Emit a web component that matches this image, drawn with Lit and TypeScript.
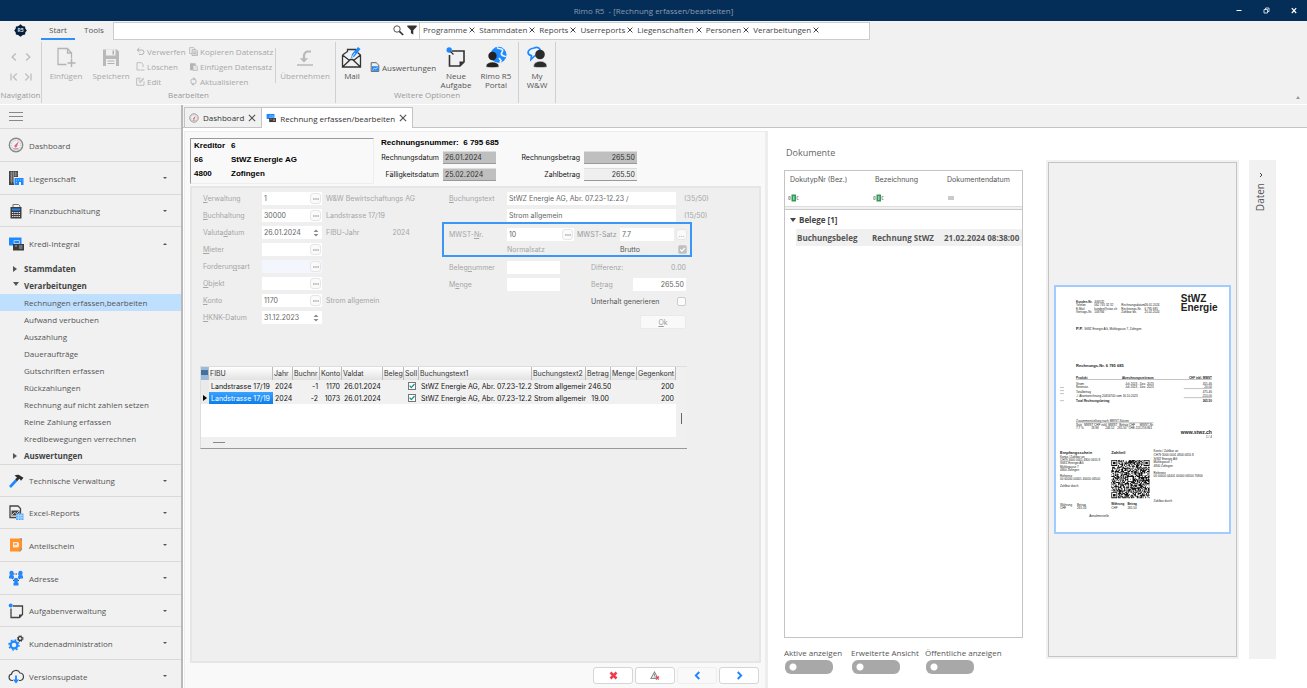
import { LitElement, html, svg, css, nothing, TemplateResult } from 'lit';
import { customElement, property, state } from 'lit/decorators.js';
import { classMap } from 'lit/directives/class-map.js';

const BLUE = '#1e88ff';
const GREY = '#b4b4b4';

const glyph = (w: number, h: number, box: string, body: TemplateResult<2>) =>
  html`<svg class="glyph" width=${w} height=${h} viewBox=${box} fill="none" aria-hidden="true">${body}</svg>`;

const icons: Record<string, () => TemplateResult> = {
  logo: () => glyph(13, 13, '0 0 13 13', svg`<path d="M6.500 0.300l2.400 1.900 2.200.3.200 2 1.500 2-1.500 2-.2 2.100-2.200.3-2.400 1.900-2.400-1.900-2.200-.3-.2-2.100-1.500-2 1.500-2 .2-2 2.200-.3z" fill="#06203c"/><text x="6.500" y="8.400" font-size="5" font-weight="700" fill="#d8e2ee" text-anchor="middle">R5</text>`),
  close: () => glyph(6, 6, '0 0 6 6', svg`<path d="M.6.6l4.800 4.800M5.400.6L.6 5.400" stroke="#444" stroke-width="1"/>`),
  tabClose: () => glyph(8, 8, '0 0 9 9', svg`<path d="M1 1l7 7M8 1L1 8" stroke="#555" stroke-width="1.300"/>`),
  min: () => glyph(6, 7, '0 0 6 7', svg`<path d="M.5 3.500h5" stroke="#fff"/>`),
  restore: () => glyph(7, 7, '0 0 7 7', svg`<path d="M1 2.500h3.500v3.500h-3.500zM2.500 2.500v-1.500h3.500v3.500h-1.500" stroke="#dde6f0" stroke-width=".9"/>`),
  winClose: () => glyph(6, 7, '0 0 6 7', svg`<path d="M.8 1.200l4.400 4.800M5.200 1.200L.8 6" stroke="#fff" stroke-width="1.200"/>`),
  search: () => glyph(11, 11, '0 0 11 11', svg`<circle cx="4" cy="4" r="3.200" stroke="#555" stroke-width="1"/><path d="M6.400 6.400l3.800 3.600" stroke="#333" stroke-width="1.700"/>`),
  filter: () => glyph(10, 10, '0 0 10 10', svg`<path d="M.3.600h9.400v1.200L6.300 5.200v4.200L3.900 8.200V5.200L.3 1.800z" fill="#333"/>`),
  prev: () => glyph(6, 8, '0 0 6 8', svg`<path d="M4.800.6L1.200 4l3.600 3.400" stroke="#bdbdbd" stroke-width="1.400"/>`),
  next: () => glyph(6, 8, '0 0 6 8', svg`<path d="M1.200.6L4.800 4 1.200 7.400" stroke="#bdbdbd" stroke-width="1.400"/>`),
  first: () => glyph(8, 8, '0 0 8 8', svg`<path d="M1 .4v7.200M6.800.6L3.200 4l3.600 3.400" stroke="#c2c2c2" stroke-width="1.400"/>`),
  last: () => glyph(8, 8, '0 0 8 8', svg`<path d="M7 .4v7.200M1.200.6L4.800 4 1.200 7.400" stroke="#c2c2c2" stroke-width="1.400"/>`),
  insert: () => glyph(20, 22, '0 0 20 22', svg`<path d="M10.500 18.500H2V2.500h9.500l4 4.500v5.500M11.500 2.500V7h4" stroke=${GREY} stroke-width="1.300"/><path d="M15.500 13v8M11.500 17h8" stroke=${GREY} stroke-width="1.500"/>`),
  save: () => glyph(18, 22, '0 0 18 22', svg`<path d="M1 3.500h14l2 2V20H1z" fill="#b9b9b9"/><path d="M4 3.500h9.500v6H4z" fill="#f0f0f0"/><path d="M10.500 4.500h1.500V8.500h-1.500z" fill="#b0b0b0"/><path d="M4 13h10v7H4z" fill="#f0f0f0"/><path d="M5.500 15h7M5.500 17.500h7" stroke="#b0b0b0"/>`),
  undo: () => glyph(9, 9, '0 0 9 9', svg`<path d="M3.500.8L1.200 3l2.300 2.200M1.200 3h4.600a2 2 0 010 4.400H3" stroke="#b0b0b0" stroke-width="1"/>`),
  remove: () => glyph(9, 9, '0 0 9 9', svg`<path d="M4.500 8H1V.7h4.500L7 2.200V5M5 8h3.500" stroke="#b8b8b8" stroke-width=".9"/>`),
  edit: () => glyph(9, 9, '0 0 9 9', svg`<path d="M8 4.500V8.300H.7V1.200H5" stroke="#b8b8b8" stroke-width=".9"/><path d="M3 6.200l.4-1.600L7.200.8l1.200 1.100-3.800 3.900z" fill="#c4c4c4"/><path d="M2 3h2" stroke="#c4c4c4"/>`),
  copy: () => glyph(9, 9, '0 0 9 9', svg`<path d="M3 2.500h4l1.500 1.500v4.500H3z" fill="#dcdcdc" stroke="#b4b4b4" stroke-width=".8"/><path d="M2.800 6.500H.6V.6h4.200l1 1.200M4.200 5h3M4.200 6.500h3" stroke="#b4b4b4" stroke-width=".8"/>`),
  paste: () => glyph(9, 9, '0 0 9 9', svg`<path d="M1 1.200h5.600v2H4v5H1z" fill="#b4b4b4"/><path d="M4 3.400h3l1.400 1.200v3.900H4z" fill="#e4e4e4" stroke="#b4b4b4" stroke-width=".7"/>`),
  refresh: () => glyph(9, 9, '0 0 9 9', svg`<circle cx="4.500" cy="4.500" r="2.700" stroke="#b8b8b8"/><path d="M4.500 0l2 1.700-2 1.700zM4.500 9l-2-1.700 2-1.700z" fill="#b8b8b8"/>`),
  accept: () => glyph(18, 22, '0 0 18 22', svg`<path d="M15 5.500h-3a4 4 0 00-4 4v4" stroke="#b9b9b9" stroke-width="2.200"/><path d="M3.800 12.200h8.400L8 16.400z" fill="#b9b9b9"/><path d="M1 19h16" stroke="#b9b9b9" stroke-width="1.500"/>`),
  mail: () => glyph(22, 22, '0 0 22 22', svg`<path d="M1.500 9l5-3.500V3.500h8v3M1.500 9v12h18V9l-3-2.500M1.500 9l7 5.500M19.500 9l-7 5.500M1.500 21l8-7.500h2l8 7.500" stroke="#333" stroke-width="1.300"/><path d="M10 12l1-4L17 1l2.500 2-6 7.500z" fill=${BLUE}/><path d="M11 11l3-4" stroke="#fff" stroke-width=".8"/>`),
  report: () => glyph(10, 10, '0 0 10 10', svg`<path d="M1.200.7h5l2.600 2.500v6.200H1.200z" stroke="#555" stroke-width=".9"/><path d="M2 4.200h6.500v4.600H2z" fill=${BLUE}/><path d="M2.800 7.600l1.700-1.300 1.300.5 1.800-1.500" stroke="#fff" stroke-width=".8"/>`),
  note: () => glyph(22, 22, '0 0 22 22', svg`<path d="M7 5h12v11l-4 4H4.500V9" stroke="#333" stroke-width="1.600"/><path d="M19 15.500h-4.500v5z" fill="#333"/><circle cx="4.200" cy="4" r="2.700" fill=${BLUE}/><path d="M5.500 5.500l3 3" stroke="#333" stroke-width="1.200"/>`),
  portal: () => glyph(22, 22, '0 0 22 22', svg`<circle cx="13.500" cy="8.800" r="8" fill=${BLUE}/><path d="M12 1.500c2 2 4.500.5 5.500 2.500s-2 2.500-1 4.500 3.500 1 4 2.500M14 12l2 2.500-1 2" stroke="#eaf4ff" stroke-width="1.700"/><circle cx="7.500" cy="10" r="4.200" fill="#222"/><path d="M1 20.500c0-6 13-6 13 0 0 1.500-13 1.500-13 0z" fill="#222" stroke="#f1f1f1" stroke-width=".6"/>`),
  support: () => glyph(22, 22, '0 0 22 22', svg`<path d="M8 2c4-1.500 6.500.5 6.500 3.500S11 10 8.500 10L5 13.500l.4-4C.8 8.500.5 3.500 8 2z" stroke=${BLUE} stroke-width="1.700" fill="#f3f8ff"/><circle cx="14" cy="8.500" r="4.800" fill="#2c2c2c"/><path d="M7.500 20.500c0-7 13.500-7 13.500 0 0 1.400-13.500 1.400-13.500 0z" fill="#2c2c2c" stroke="#f1f1f1" stroke-width=".6"/>`),
  gauge: () => glyph(16, 16, '0 0 16 16', svg`<circle cx="8" cy="8" r="6.700" stroke="#8a8a8a" stroke-width="1.400"/><circle cx="8" cy="8" r="4.600" stroke="#b5b5b5" stroke-width="1" stroke-dasharray="1 1.200"/><path d="M10.800 4.200L9 9.300a1.300 1.300 0 11-2-1.200z" fill="#e8607a"/><path d="M5.500 11.800h5" stroke="#999"/>`),
  estate: () => glyph(16, 16, '0 0 16 16', svg`<path d="M1 1h9v6H6v8H1z" fill="#444"/><path d="M2 3h7.500M2 5h7.500M2 7h4M2 9h4M2 11h4M3.500 1.500v12M5.500 1.500v12M7.700 1.500v5" stroke="#aaa" stroke-width=".6"/><path d="M6.500 8h9v7H13v-3h-2v3H6.500z" fill=${BLUE}/><path d="M8 10h6.500M8 12.500h2" stroke="#cfe6ff" stroke-width=".8" stroke-dasharray="1 1"/>`),
  calc: () => glyph(16, 16, '0 0 16 16', svg`<path d="M5 4V1.500h5.500L12 3v1" stroke="#777"/><path d="M2.500 4h11v11.500h-11z" fill="#3d3d3d"/><path d="M4 5.500h8v2H4z" fill=${BLUE}/><path d="M4 9.500h8.500M4 11.500h8.500M4 13.500h8.500" stroke="#e6e6e6" stroke-width="1" stroke-dasharray="1.400 .8"/>`),
  kredi: () => glyph(16, 16, '0 0 16 16', svg`<path d="M1 1.500h12.500v8H1z" fill=${BLUE}/><path d="M6 4.500h5.500v3H6z" stroke="#bfe0ff" stroke-width=".8"/><path d="M5 8h11v6.500H5z" fill="#3c3c3c"/><path d="M7 10h2M11 10h3.500M11 12h3.500" stroke="#b0b0b0"/>`),
  hammer: () => glyph(16, 16, '0 0 16 16', svg`<path d="M2 14L9 6.500" stroke=${BLUE} stroke-width="2.600"/><path d="M6.500 2.500c3-1.500 5-.8 6.500.8l2.500 1.500-2.500 3-1.500-2-2.500 2.200L7.500 6l1.500-1.500z" fill="#2d2d2d"/>`),
  excel: () => glyph(16, 16, '0 0 16 16', svg`<path d="M2 1h8l2.500 2.500v9H2z" stroke="#444" stroke-width="1.300"/><path d="M3.500 5.500h8v5h-8z" fill="#444"/><path d="M4 10l2.500-2.500 2 1L11 6" stroke="#eee" stroke-width=".8"/><path d="M8 8.500h7.500v6.500H8z" fill="#5aabff"/><path d="M8 10.700h7.500M8 12.900h7.500M10.500 8.500v6.500M13 8.500v6.500" stroke="#d8ecff" stroke-width=".6"/>`),
  share: () => glyph(16, 16, '0 0 16 16', svg`<path d="M2 1.500h12v11l-2 2H2z" fill="#ff922b"/><path d="M5 5h4.500l1.500 1v3.500l-1.500 1H5z" fill="#ffe9d2"/><path d="M6 6.300h3v1.500H6z" fill="#ff922b"/><path d="M11.500 1.500h2.500v2.500zM14 10.500v2l-2 2h-1z" fill="#8a9096"/>`),
  people: () => glyph(16, 16, '0 0 16 16', svg`<path d="M5 4h6M4 8l2.500 4M12 8l-2.500 4" stroke="#333" stroke-dasharray="1.500 1"/><circle cx="3.500" cy="3" r="2.200" fill=${BLUE}/><path d="M1 8.500V6.500q0-1.500 1.500-1.500h2q1.500 0 1.500 1.500v2z" fill=${BLUE}/><circle cx="12.500" cy="3" r="2.200" fill=${BLUE}/><path d="M10 8.500V6.500q0-1.500 1.500-1.500h2q1.500 0 1.500 1.500v2z" fill=${BLUE}/><circle cx="8" cy="10" r="2.200" fill=${BLUE}/><path d="M5.500 15.500v-2q0-1.500 1.500-1.500h2q1.500 0 1.500 1.500v2z" fill=${BLUE}/>`),
  task: () => glyph(16, 16, '0 0 16 16', svg`<path d="M5 3h9.500v8.500l-3 3H3V5.500" stroke="#444" stroke-width="1.300"/><path d="M14.500 11.500h-3.500v3.500z" fill="#444"/><circle cx="2.700" cy="2.500" r="2" fill=${BLUE}/>`),
  gears: () => glyph(16, 16, '0 0 16 16', svg`<circle cx="6" cy="10" r="3.400" stroke=${BLUE} stroke-width="2.200"/><circle cx="6" cy="10" r="5" stroke=${BLUE} stroke-width="1.500" stroke-dasharray="1.900 2"/><circle cx="12.200" cy="3.600" r="1.900" stroke="#333" stroke-width="1.300"/><circle cx="12.200" cy="3.600" r="2.900" stroke="#333" stroke-width="1" stroke-dasharray="1.100 1.200"/>`),
  cloud: () => glyph(16, 16, '0 0 16 16', svg`<path d="M5 12.500H4a3.200 3.200 0 01-.5-6.300A4.500 4.500 0 0112 5a3.800 3.800 0 01.5 7.500H11" stroke="#444" stroke-width="1.200"/><path d="M8 7.500v6.500" stroke=${BLUE} stroke-width="1.800"/><path d="M4.800 11.500h6.400L8 15.500z" fill=${BLUE}/>`),
  abc: () => glyph(12, 8, '0 0 12 8', svg`<path d="M3.500.5h4.500v7H3.500z" fill="#2e9a55"/><path d="M5 2.500h1.500v1H5zM5 4.500h1.500v1H5z" fill="#fff"/><path d="M2.200 2.500H.8v3h1.400zM10.500 2.500H9v3h1.500" stroke="#888" stroke-width=".8"/>`),
  equals: () => glyph(6, 4, '0 0 6 4', svg`<path d="M0 1h6M0 3h6" stroke="#888" stroke-width=".9"/>`),
  cancel: () => glyph(9, 9, '0 0 9 9', svg`<path d="M1.500 1.500l6 6M7.500 1.500l-6 6" stroke="#f23b4a" stroke-width="2.600"/>`),
  warn: () => glyph(10, 9, '0 0 10 9', svg`<path d="M4.500 1L8 7.500H1z" stroke="#8c8c8c" stroke-width="1.100"/><path d="M3.500 6h3M4.500 3v2" stroke="#8c8c8c" stroke-width=".9"/><path d="M6 5.500l3 3M9 5.500l-3 3" stroke="#f23b4a" stroke-width="1.200"/>`),
  back: () => glyph(7, 9, '0 0 7 9', svg`<path d="M5.300 1L1.800 4.500l3.500 3.500" stroke=${BLUE} stroke-width="1.900"/>`),
  forward: () => glyph(7, 9, '0 0 7 9', svg`<path d="M1.700 1l3.500 3.500L1.700 8" stroke=${BLUE} stroke-width="1.900"/>`),
  spin: () => glyph(6, 8, '0 0 6 8', svg`<path d="M.5 3L3 .5 5.500 3zM.5 5L3 7.500 5.500 5z" fill="#8c8c8c"/>`),
  dots: () => glyph(6, 2, '0 0 6 2', svg`<path d="M0 1h6" stroke="#8a8a8a" stroke-width="1.200" stroke-dasharray="1.600 .6"/>`),
  chevron: () => glyph(4, 6, '0 0 4 6', svg`<path d="M1 1l2 2-2 2" stroke="#444" stroke-width="1"/>`),
};
const icon = (n: string) => icons[n]();

const shared = css`
  .glyph { display: block; flex: none; }
  button { font: inherit; color: inherit; background: none; border: 0; padding: 0; }
`;

@customElement('ribbon-bar')
class RibbonBar extends LitElement {
  static styles = [shared, css`
    :host { display: block; background: #f1f1f1; color: #555; border-bottom: 1px solid #fff; }
    .title { display: grid; grid-template-columns: 80px 1fr 80px; align-items: center; height: 21px; background: #042e57; color: #8a9cb0; text-align: center; }
    .win { display: flex; gap: 21px; justify-content: flex-end; padding-right: 10px; }
    .tabs { display: flex; height: 19px; align-items: stretch; }
    .logo { width: 41px; display: flex; align-items: center; justify-content: center; }
    .tab { width: 34px; border-bottom: 2px solid transparent; }
    .tab.wide { width: 38px; }
    .tab.on { border-bottom-color: #2f8ffa; }
    .search { display: flex; align-items: center; gap: 3px; flex: 0 1 307px; margin-top: 1px; border: 1px solid #ccc; background: #fff; padding: 0 2px 2px 0; box-sizing: border-box; height: 18px; }
    .search input { flex: 1; min-width: 0; border: 0; outline: 0; font: inherit; background: none; }
    .quick { display: flex; align-items: center; gap: 4px; flex: 0 1 450px; margin-top: 1px; height: 18px; box-sizing: border-box; border: 1px solid #ccc; border-left: 0; background: #fff; padding: 0 0 3px 3px; white-space: nowrap; color: #444; overflow: hidden; }
    .quick span { display: flex; align-items: center; gap: 2px; }
    .body { display: flex; height: 64px; }
    .group { display: flex; flex-direction: column; border-right: 1px solid #d0d0d0; box-sizing: border-box; margin: 2px 0 1px; }
    .items { display: flex; height: 48px; padding-top: 4px; box-sizing: border-box; }
    .cap { height: 10px; line-height: 10px; text-align: center; color: #999; }
    .big { display: flex; flex-direction: column; align-items: center; gap: 3px; line-height: 9px; height: 43px; }
    .off { color: #a8a8a8; }
    .col { display: flex; flex-direction: column; margin-top: -2px; }
    .small { display: flex; align-items: center; gap: 2px; height: 15px; white-space: nowrap; }
    .nav { display: grid; grid-template-columns: 14px 14px; justify-content: center; align-content: start; row-gap: 12px; justify-items: center; padding-top: 11px; }
    .rule { width: 1px; background: #d0d0d0; height: 35px; margin: 2px 0; }
    .g1 { width: 42px; } .g2 { width: 294px; } .g3 { width: 183px; } .g4 { width: 37px; }
    .w42 { width: 42px; } .w48 { width: 48px; } .w58 { width: 58px; } .w32 { width: 32px; } .w36 { width: 36px; } .w40 { width: 40px; }
    .c1 { width: 53px; margin-left: 4px; } .c2 { width: 86px; } .c3 { width: 66px; margin-left: 2px; justify-content: center; height: 46px; }
    .fold { margin: auto 7px 5px auto; border: 2px solid transparent; border-bottom: 3px solid #999; border-top: 0; }
  `];
  big(ic: string, a: string, w: string, b = '', off = false) {
    return html`<button class=${`big ${w} ${off ? 'off' : ''}`}>${icon(ic)}<span>${a}${b ? html`<br>${b}` : nothing}</span></button>`;
  }
  small(ic: string, t: string) {
    return html`<button class="small">${icon(ic)}<span>${t}</span></button>`;
  }
  render() {
    return html`
      <div class="title"><span></span><span>Rimo R5&nbsp; - [Rechnung erfassen/bearbeiten]</span>
        <div class="win"><button aria-label="Minimieren">${icon('min')}</button><button aria-label="Wiederherstellen">${icon('restore')}</button><button aria-label="Schliessen">${icon('winClose')}</button></div></div>
      <div class="tabs">
        <div class="logo">${icon('logo')}</div>
        <button class="tab on">Start</button><button class="tab wide">Tools</button>
        <div class="search"><input type="search" aria-label="Suche">${icon('search')}${icon('filter')}</div>
        <div class="quick">${['Programme', 'Stammdaten', 'Reports', 'Userreports', 'Liegenschaften', 'Personen', 'Verarbeitungen'].map(
          (t) => html`<span>${t}<button aria-label=${t + ' schliessen'}>${icon('close')}</button></span>`)}</div>
      </div>
      <div class="body">
        <div class="group g1"><div class="items nav">${['prev', 'next', 'first', 'last'].map((n) => html`<button aria-label=${n}>${icon(n)}</button>`)}</div><div class="cap">Navigation</div></div>
        <div class="group g2"><div class="items off">
          ${this.big('insert', 'Einfügen', 'w48', '', true)}${this.big('save', 'Speichern', 'w42', '', true)}
          <div class="col c1">${this.small('undo', 'Verwerfen')}${this.small('remove', 'Löschen')}${this.small('edit', 'Edit')}</div>
          <div class="col c2">${this.small('copy', 'Kopieren Datensatz')}${this.small('paste', 'Einfügen Datensatz')}${this.small('refresh', 'Aktualisieren')}</div>
          <div class="rule"></div>${this.big('accept', 'Übernehmen', 'w58', '', true)}
        </div><div class="cap">Bearbeiten</div></div>
        <div class="group g3"><div class="items">
          ${this.big('mail', 'Mail', 'w32')}<div class="col c3">${this.small('report', 'Auswertungen')}</div>
          ${this.big('note', 'Neue', 'w40', 'Aufgabe')}${this.big('portal', 'Rimo R5', 'w40', 'Portal')}
        </div><div class="cap">Weitere Optionen</div></div>
        <div class="group g4"><div class="items">${this.big('support', 'My', 'w36', 'W&W')}</div></div>
        <button class="fold" aria-label="Menüband einklappen"></button>
      </div>`;
  }
}

@customElement('side-nav')
class SideNav extends LitElement {
  static styles = [shared, css`
    :host { display: block; background: #f1f1f1; border-right: 2px solid #b9b9b9; color: #555; overflow: hidden; box-sizing: border-box; }
    button { text-align: left; }
    .burger { display: flex; flex-direction: column; justify-content: center; gap: 3px; height: 24px; width: 100%; padding-left: 9px; border-bottom: 1px solid #d9d9d9; box-sizing: border-box; }
    .burger i { width: 14px; height: 1px; background: #888; }
    .sec { display: flex; align-items: center; gap: 5px; width: 100%; height: 33px; padding: 0 14px 0 8px; border-bottom: 1px solid #d9d9d9; box-sizing: border-box; }
    .sec.short { height: 32px; }
    .sec.open { border-bottom: 0; }
    .sec span { flex: 1; }
    .arr { border: 2px solid transparent; border-top: 2px solid #555; border-bottom: 0; }
    .arr.up { border-top: 0; border-bottom: 2px solid #555; }
    .tree { border-bottom: 1px solid #d9d9d9; }
    .row { display: flex; align-items: center; height: 17px; width: 100%; padding-left: 24px; text-decoration: none; color: inherit; box-sizing: border-box; }
    .row.on { background: #bfdfff; }
    .head { padding-left: 13px; gap: 6px; font-weight: 700; color: #444; }
    .tri { width: 0; height: 0; border: 3px solid transparent; border-left: 4px solid #555; border-right: 0; margin-right: 1px; }
    .tri.down { border: 3px solid transparent; border-top: 4px solid #555; border-bottom: 0; margin: 0 -1px 3px 0; }
  `];
  @state() private sel = 'Rechnungen erfassen,bearbeiten';
  sec(ic: string, t: string, arr: '' | 'down' | 'up' = 'down', short = false) {
    return html`<button class=${classMap({ sec: true, short, open: arr === 'up' })}>${icon(ic)}<span>${t}</span>${arr ? html`<i class=${'arr ' + arr}></i>` : nothing}</button>`;
  }
  pick(e: Event, r: string) {
    e.preventDefault();
    this.sel = r;
  }
  render() {
    const rows = ['Rechnungen erfassen,bearbeiten', 'Aufwand verbuchen', 'Auszahlung', 'Daueraufträge', 'Gutschriften erfassen', 'Rückzahlungen', 'Rechnung auf nicht zahlen setzen', 'Reine Zahlung erfassen', 'Kredibewegungen verrechnen'];
    return html`<button class="burger" aria-label="Menü"><i></i><i></i><i></i></button>
      ${this.sec('gauge', 'Dashboard', '')}${this.sec('estate', 'Liegenschaft')}${this.sec('calc', 'Finanzbuchhaltung', 'down', true)}${this.sec('kredi', 'Kredi-Integral', 'up')}
      <div class="tree">
        <button class="row head"><i class="tri"></i>Stammdaten</button>
        <button class="row head"><i class="tri down"></i>Verarbeitungen</button>
        ${rows.map((r) => html`<a href="#" class=${classMap({ row: true, on: r === this.sel })} @click=${(e: Event) => this.pick(e, r)}>${r}</a>`)}
        <button class="row head"><i class="tri"></i>Auswertungen</button>
      </div>
      ${this.sec('hammer', 'Technische Verwaltung', 'down', true)}${this.sec('excel', 'Excel-Reports', 'down', true)}${this.sec('share', 'Anteilschein')}${this.sec('people', 'Adresse')}${this.sec('task', 'Aufgabenverwaltung', 'down', true)}${this.sec('gears', 'Kundenadministration')}${this.sec('cloud', 'Versionsupdate')}`;
  }
}

interface Line { fibu: string; nr: string; konto: string; text: string; betrag: string; }

@customElement('invoice-form')
class InvoiceForm extends LitElement {
  static styles = [shared, css`
    :host { display: flex; flex-direction: column; background: #f9f9f9; border: solid #ededed; border-width: 1px 3px 0 1px; box-sizing: border-box; padding: 5px 4px 4px 5px; font: 7px/9px Inter, "Liberation Sans", sans-serif; color: #222; min-width: 0; }
    input { font: inherit; color: #666; border: 0; border-radius: 0; outline: 0; padding: 0 2px; margin: 0; background: #fff; height: 13px; box-sizing: border-box; width: 100%; min-width: 0; }
    .top { display: flex; gap: 4px; height: 49px; }
    .cred { width: 184px; height: 46px; margin-top: 1px; box-sizing: border-box; border: 1px solid #999; border-right-color: #eee; border-bottom-color: #eee; display: grid; grid-template-columns: 37px 1fr; grid-auto-rows: 14px; align-items: center; padding-left: 3px; font: 700 8px/10px "Liberation Sans", sans-serif; color: #000; }
    .sum { display: grid; grid-template-columns: 61px 53px 80px 53px; column-gap: 4px; grid-template-rows: 12px 17px 17px; align-items: center; }
    .sum h2 { grid-column: 1 / -1; margin: 0 0 0 3px; font: 700 8px/10px "Liberation Sans", sans-serif; color: #000; white-space: pre; }
    .sum label { text-align: right; color: #111; }
    .sum input { background: #bfbfbf; color: #333; border-bottom: 1px solid #999; border-top: 1px solid #ddd; }
    .sum .r { text-align: right; }
    .sum .p { background: #efefef; }
    .panel { flex: 1; border: 2px solid #e6e6e6; background: #efefef; padding: 2px 8px; color: #a6a6a6; }
    .cols { display: grid; grid-template-columns: 242px 1fr; height: 142px; }
    .l { display: grid; grid-template-columns: 59px 60px auto 1fr; grid-auto-rows: 17px; align-items: center; align-content: start; margin-left: 3px; }
    .l > span { margin-left: 4px; white-space: nowrap; }
    .yr { margin-left: 33px; }
    .box { display: flex; background: #fff; height: 13px; align-items: center; padding-right: 1px; }
    .box.tint { background: #f3f7fd; }
    .box input { flex: 1; background: none; }
    .box button, .more { width: 11px; height: 11px; flex: none; display: flex; align-items: center; justify-content: center; background: #fafafa; border: 1px solid #e6e6e6; border-radius: 3px; box-sizing: border-box; }
    .spin button { border-color: transparent; background: none; }
    .r0 { display: grid; grid-template-columns: 58px 169px auto; align-items: center; height: 17px; margin-left: 7px; }
    .r0 span { margin-left: 8px; }
    .mwst { width: 250px; height: 35px; margin-top: -2px; box-sizing: border-box; border: 2px solid #3a97f7; padding: 2px 3px 0 5px; display: grid; grid-template-columns: 58px 67px 46px 54px 1fr; grid-template-rows: 17px 12px; align-items: center; }
    .mwst .s { margin-left: 3px; color: #999; }
    .more { margin-left: 2px; align-items: flex-end; }
    .d { color: #555; }
    .chk { width: 9px; height: 9px; padding: 0; appearance: none; border: 1px solid #ccc; border-radius: 2px; background: #fbfbfb; }
    .chk:checked { background: #c0c0c0 url('data:image/svg+xml,<svg xmlns="http://www.w3.org/2000/svg" viewBox="0 0 7 7"><path d="M1.300 3.500l1.600 1.700L5.800 2" stroke="white" fill="none" stroke-width="1.200"/></svg>'); }
    .mwst .chk { justify-self: end; }
    .low { display: grid; grid-template-columns: 58px 53px 31px 42px 53px; grid-auto-rows: 17px; margin-left: 7px; margin-top: 2px; align-items: center; }
    .low .a3 { grid-column: 4; } .low .v { text-align: right; }
    .low .wide { grid-column: 4 / 6; display: flex; justify-content: space-between; align-items: center; color: #555; }
    .ok { grid-column: 4 / 6; justify-self: end; width: 46px; height: 14px; margin-top: 7px; background: #f9f9f9; border: 1px solid #eaeaea; border-radius: 2px; color: #999; }
    .grid { width: 487px; max-width: 100%; margin-top: 34px; border-bottom: 1px solid #999; border-left: 1px solid #ddd; border-top: 1px solid #ddd; box-sizing: border-box; display: grid; grid-template-columns: 1fr 11px; grid-template-rows: 70px 11px; color: #222; }
    .view { background: #fff; overflow: hidden; }
    table { border-collapse: separate; border-spacing: 0; table-layout: fixed; width: 475px; }
    th, td { padding: 0 2px; font-weight: 400; text-align: left; white-space: nowrap; overflow: hidden; height: 12px; box-sizing: border-box; }
    th { height: 13px; background: linear-gradient(#fff, #e2e2e2); border-right: 1px solid #bbb; padding: 0 1px; color: #333; }
    td { background: #f1f1f1; color: #111; }
    td.n { text-align: right; }
    td.sel { background: linear-gradient(#3ba2ff, #0a7eea); color: #fff; }
    th:first-child { background: linear-gradient(#9db9d8 3px, #44709f 3px 8px, #9db9d8 8px); }
    td.ptr { background: #eaeaea; }
    td:first-child, td.c { padding: 0; }
    .ptr i { display: block; border: 3px solid transparent; border-left: 4px solid #000; border-right: 0; width: 0; margin-left: 2px; }
    .tick { width: 8px; height: 8px; padding: 0; appearance: none; display: block; margin: auto; border: 1px solid #777; background: #fff; }
    .tick:checked { background: #fff url('data:image/svg+xml,<svg xmlns="http://www.w3.org/2000/svg" viewBox="0 0 6 6"><path d="M.6 2.700L2.300 4.600 5.500 1" stroke="%23138a8a" fill="none" stroke-width="1.200"/></svg>'); }
    .bar { background: #f0f0f0; display: flex; align-items: center; }
    .bar.v { justify-content: center; align-items: flex-end; padding-bottom: 13px; }
    .bar.v i { width: 1px; height: 11px; background: #666; }
    .bar.h { grid-column: 1 / 3; padding-left: 12px; }
    .bar.h i { width: 12px; height: 1px; background: #888; }
    .foot { display: flex; justify-content: flex-end; gap: 2px; padding: 4px 2px 0 0; }
    .foot button { width: 40px; height: 17px; display: flex; align-items: center; justify-content: center; background: #fff; border: 1px solid #d5d5d5; border-radius: 3px; box-sizing: border-box; }
    .foot button:disabled { background: #f9f9f9; border-color: #eee; }
  `];
  @property({ attribute: false }) lines: Line[] = [
    { fibu: 'Landstrasse 17/19', nr: '-1', konto: '1170', text: 'Strom allgemein', betrag: '246.50' },
    { fibu: 'Landstrasse 17/19', nr: '-2', konto: '1073', text: 'Strom allgemein', betrag: '19.00' },
  ];
  field(id: string, pre: string, key: string, post: string, value: string, kind = 'dots', tint = false) {
    return html`<label for=${id}>${pre}<u>${key}</u>${post}</label>
      <div class=${classMap({ box: true, spin: kind === 'spin', tint })}><input id=${id} .value=${value}><button aria-label="Auswählen">${icon(kind)}</button></div>`;
  }
  render() {
    const w = [8, 64, 20, 27, 22, 41, 21, 15, 113, 54, 25, 26, 39];
    return html`
      <div class="top">
        <div class="cred"><span>Kreditor</span><span>6</span><span>66</span><span>StWZ Energie AG</span><span>4800</span><span>Zofingen</span></div>
        <div class="sum"><h2>Rechnungsnummer:  6 795 685</h2>
          <label for="rd">Rechnungsdatum</label><input id="rd" value="26.01.2024"><label for="rb">Rechnungsbetrag</label><input id="rb" class="r" value="265.50">
          <label for="fd">Fälligkeitsdatum</label><input id="fd" value="25.02.2024"><label for="zb">Zahlbetrag</label><input id="zb" class="r p" value="265.50"></div>
      </div>
      <div class="panel">
        <div class="cols">
          <div class="l">
            ${this.field('f1', '', 'V', 'erwaltung', '1')}<span>W&amp;W Bewirtschaftungs AG</span><i></i>
            ${this.field('f2', '', 'B', 'uchhaltung', '30000')}<span>Landstrasse 17/19</span><i></i>
            ${this.field('f3', 'Valuta', 'd', 'atum', '26.01.2024', 'spin')}<span>FIBU-Jahr<span class="yr">2024</span></span><i></i>
            ${this.field('f4', '', 'M', 'ieter', '')}<i></i><i></i>
            ${this.field('f5', 'Forderun', 'g', 'sart', '', 'dots', true)}<i></i><i></i>
            ${this.field('f6', '', 'O', 'bjekt', '')}<i></i><i></i>
            ${this.field('f7', '', 'K', 'onto', '1170')}<span>Strom allgemein</span><i></i>
            ${this.field('f8', '', 'H', 'KNK-Datum', '31.12.2023', 'spin')}
          </div>
          <div>
            <div class="r0"><label for="bt"><u>B</u>uchungstext</label><input id="bt" value="StWZ Energie AG, Abr. 07.23-12.23 /"><span>(35/50)</span></div>
            <div class="r0"><i></i><input aria-label="Buchungstext 2" value="Strom allgemein"><span>(15/50)</span></div>
            <div class="mwst">
              <label for="mn">MWST-<u>N</u>r.</label><div class="box"><input id="mn" value="10"><button aria-label="Auswählen">${icon('dots')}</button></div>
              <label class="s" for="ms">MWST-Satz</label><input id="ms" value="7.7"><button class="more">...</button>
              <i></i><span>Normalsatz</span><i></i><label class="d" for="br">Brutto</label><input id="br" class="chk" type="checkbox" checked>
            </div>
            <div class="low">
              <label for="bn">Beleg<u>n</u>ummer</label><input id="bn"><span class="a3">Differenz:</span><span class="v">0.00</span>
              <label for="mg">M<u>e</u>nge</label><input id="mg"><label class="a3" for="bg">Be<u>t</u>rag</label><input id="bg" class="v" value="265.50">
              <div class="wide"><label for="ug">Unterhalt generieren</label><input id="ug" class="chk" type="checkbox"></div>
              <button class="ok"><u>O</u>k</button>
            </div>
          </div>
        </div>
        <div class="grid">
          <div class="view"><table><colgroup>${w.map((x) => html`<col style=${`width:${x}px`}>`)}</colgroup>
            <thead><tr><th></th>${['FIBU', 'Jahr', 'Buchnr', 'Konto', 'Valdat', 'Beleg', 'Soll', 'Buchungstext1', 'Buchungstext2', 'Betrag', 'Menge', 'Gegenkont'].map((h) => html`<th>${h}</th>`)}</tr></thead>
            <tbody>${this.lines.map((l, i) => html`<tr><td class="ptr">${i ? html`<i></i>` : nothing}</td><td class=${i ? 'sel' : ''}>${l.fibu}</td><td>2024</td><td class="n">${l.nr}</td><td class="n">${l.konto}</td><td>26.01.2024</td><td></td>
              <td class="c"><input class="tick" type="checkbox" aria-label="Soll" checked></td><td>StWZ Energie AG, Abr. 07.23-12.2</td><td>${l.text}</td><td class="n">${l.betrag}</td><td></td><td class="n">200</td></tr>`)}</tbody></table></div>
          <div class="bar v"><i></i></div><div class="bar h"><i></i></div>
        </div>
      </div>
      <div class="foot"><button aria-label="Abbrechen">${icon('cancel')}</button><button aria-label="Warnung">${icon('warn')}</button><button aria-label="Zurück" disabled>${icon('back')}</button><button aria-label="Weiter">${icon('forward')}</button></div>`;
  }
}

const qrModules = () => {
  const n = 45;
  let seed = 20240126;
  let d = '';
  const finder = (x: number, y: number) => {
    for (const [ox, oy] of [[0, 0], [n - 7, 0], [0, n - 7]]) {
      const dx = x - ox, dy = y - oy;
      if (dx >= -1 && dx <= 7 && dy >= -1 && dy <= 7) {
        const m = Math.max(Math.abs(dx - 3), Math.abs(dy - 3));
        return m === 3 || m <= 1;
      }
    }
    return null;
  };
  for (let y = 0; y < n; y++) for (let x = 0; x < n; x++) {
    seed = (seed * 1103515245 + 12345) % 2147483648;
    const f = finder(x, y);
    const mid = Math.max(Math.abs(x - 22), Math.abs(y - 22));
    const on = f !== null ? f : mid < 4 ? mid === 3 || mid === 0 : seed / 2147483648 > 0.42;
    if (on) d += `M${x} ${y}h1v1h-1z`;
  }
  return d;
};

@customElement('document-pane')
class DocumentPane extends LitElement {
  static styles = [shared, css`
    :host { display: grid; grid-template-columns: 239px 216px 61px; justify-content: start; background: #fff; color: #555; padding: 0 0 14px 16px; box-sizing: border-box; }
    .list { display: flex; flex-direction: column; min-width: 0; }
    h1 { margin: 18px 0 10px 2px; font-weight: 400; font-size: 9px; line-height: 14px; color: #666; }
    .tbl { flex: 1; border: 1px solid #c4c4c4; overflow: hidden; }
    table { border-collapse: collapse; table-layout: fixed; width: 100%; }
    th { font: 7px/10px Inter, sans-serif; text-align: left; padding: 0 0 0 5px; height: 18px; white-space: nowrap; }
    td { padding: 0 0 0 3px; }
    .flt td { height: 17px; }
    .flt td:last-child { padding-left: 6px; }
    .sep td { height: 4px; padding: 0; line-height: 0; background: linear-gradient(#ddd 1px, #f1f1f1 1px 3px, #c8c8c8 3px); }
    .grp td { height: 19px; font-weight: 700; color: #444; padding-left: 5px; }
    .grp i { display: inline-block; border: 3px solid transparent; border-top: 4px solid #444; border-bottom: 0; margin-right: 3px; vertical-align: 1px; }
    .rec td { height: 17px; font-weight: 700; white-space: nowrap; background: #f0f0f0; padding-left: 2px; }
    .rec td:first-child { padding-left: 12px; background: linear-gradient(90deg, #fff 11px, #f0f0f0 11px); }
    .sw { display: grid; grid-template-columns: 67px 74px auto; justify-content: start; margin-top: 9px; height: 27px; align-content: start; }
    .sw label { display: flex; flex-direction: column; gap: 1px; line-height: 12px; white-space: nowrap; }
    .sw input { appearance: none; width: 48px; height: 14px; margin: 0 0 0 1px; border-radius: 6px; background: radial-gradient(circle at 8px 7px, #fff 3px, #a8a8a8 4px); }
    .prev { margin: 32px 0 15px 23px; box-sizing: border-box; background: #f1f1f1; padding: 2px; min-width: 0; }
    .frame { height: 100%; border: 1px solid #c4c4c4; box-sizing: border-box; padding: 0 5px; display: flex; align-items: center; }
    .page { width: 100%; border: 2px solid #a0ccff; background: #fff; display: block; box-sizing: border-box; }
    .side { margin: 32px 0 15px 10px; width: 27px; background: #f1f1f1; display: flex; flex-direction: column; align-items: center; padding: 12px 4px 0 0; gap: 5px; box-sizing: border-box; font-size: 10px; }
    .side button { writing-mode: vertical-rl; transform: rotate(180deg); }
  `];
  page() {
    const t = (x: number, y: number, s: string, z = 3, o: 'start' | 'middle' | 'end' = 'start', b = false) =>
      svg`<text x=${x} y=${y} font-size=${z} text-anchor=${o} font-weight=${b ? 700 : 400}>${s}</text>`;
    const rule = (x1: number, x2: number, y: number) => svg`<path d=${`M${x1} ${y}H${x2}`} stroke="#888" stroke-width=".5"/>`;
    return html`<svg class="page" viewBox="1 1 172 244" font-family="Liberation Sans, sans-serif" fill="#222" role="img" aria-label="Rechnung">
      ${t(125, 16, 'StWZ', 10, 'start', true)}${t(125, 25, 'Energie', 10, 'start', true)}
      ${t(21, 17, 'Kunden-Nr.', 3, 'start', true)}${t(39, 17, '409532')}
      ${t(21, 20, 'Telefon')}${t(39, 20, '062 745 32 32')}${t(66, 20, 'Rechnungsdatum')}${t(89, 20, '26.01.2024')}
      ${t(21, 24, 'E-Mail')}${t(39, 24, 'kunden@stwz.ch')}${t(66, 24, 'Rechnungs-Nr.')}${t(89, 24, '6 795 685')}
      ${t(21, 27, 'Vertrags-Nr.')}${t(39, 27, '103784')}${t(66, 27, 'Zahlbar bis')}${t(89, 27, '25.02.2024')}
      ${t(21, 44, 'P.P.', 4, 'start', true)}${t(29, 44, 'StWZ Energie AG, Mühlegasse 7, Zofingen')}
      ${t(21, 81, 'Rechnungs-Nr. 6 795 685', 4, 'start', true)}
      ${t(21, 92, 'Produkt', 3, 'start', true)}${t(98, 92, 'Abrechnungszeitraum', 3, 'end', true)}${t(156, 92, 'CHF inkl. MWST', 3, 'end', true)}${rule(21, 156, 93)}
      ${t(21, 98, 'Strom')}${t(98, 98, 'Juli 2023 - Dez. 2023', 3, 'end')}${t(156, 98, '455.46', 3, 'end')}
      ${t(21, 101, 'Netznutz.')}${t(98, 101, 'Juli 2023 - Dez. 2023', 3, 'end')}${t(156, 101, '20.00', 3, 'end')}${rule(128, 156, 102)}
      ${t(21, 106, 'Totalbetrag')}${t(156, 106, '475.46', 3, 'end')}
      ${t(21, 110, './. Akontorechnung 20456740 vom 16.10.2023')}${t(156, 110, '-210.00', 3, 'end')}${rule(128, 156, 111)}
      ${t(21, 115, 'Total Rechnungsbetrag', 3, 'start', true)}${t(156, 115, '265.50', 3, 'end', true)}
      ${rule(5, 9, 101)}${rule(5, 9, 104)}${rule(5, 9, 107)}${rule(5, 9, 114)}
      ${t(21, 135, 'Zusammenstellung nach MWST-Sätzen')}${rule(21, 98, 136)}
      ${t(21, 139, 'Satz')}${t(29, 139, 'MWST CHF')}${t(46, 139, 'exkl. MWST')}${t(64, 139, 'Betrag CHF')}${t(98, 139, 'MWST-Nr.', 3, 'end')}
      ${t(21, 142, '7.7 %')}${t(36, 142, '18.98')}${t(50, 142, '246.52')}${t(62, 142, '265.50')}${t(73, 142, 'CHE-113.259.861')}
      ${t(156, 147, 'www.stwz.ch', 5, 'end', true)}${t(156, 151, '1 / 4', 3, 'end')}
      ${t(5, 167, 'Empfangsschein', 4, 'start', true)}${t(5, 171, 'Konto / Zahlbar an')}${t(5, 174, 'CH79 3000 0001 4800 0655 8')}${t(5, 177, 'StWZ Energie AG')}${t(5, 181, 'Mühlegasse 7')}${t(5, 184, '4800 Zofingen')}
      ${t(5, 190, 'Referenz')}${t(5, 193, '00 00000 04401 40000 06500')}${t(5, 200, 'Zahlbar durch')}
      ${t(5, 219, 'Währung')}${t(22, 219, 'Betrag')}${t(5, 222, 'CHF')}${t(22, 222, '265.50')}${t(34, 230, 'Annahmestelle')}
      ${t(56, 167, 'Zahlteil', 4, 'start', true)}
      <g transform="translate(56 173) scale(0.844)"><path d=${qrModules()} fill="#111"/></g>
      ${t(56, 218, 'Währung', 3, 'start', true)}${t(72, 218, 'Betrag', 3, 'start', true)}${t(56, 222, 'CHF')}${t(72, 222, '265.50')}
      ${t(98, 165, 'Konto / Zahlbar an')}${t(98, 169, 'CH79 3000 0001 4800 0655 8')}${t(98, 173, 'StWZ Energie AG')}${t(98, 176, 'Mühlegasse 7')}${t(98, 180, '4800 Zofingen')}
      ${t(98, 187, 'Referenz')}${t(98, 190, '00 00000 04401 40000 06500 70800')}${t(98, 215, 'Zahlbar durch')}
    </svg>`;
  }
  render() {
    return html`
      <section class="list"><h1>Dokumente</h1>
        <div class="tbl"><table><colgroup>${[85, 72, 80].map((x) => html`<col style=${`width:${x}px`}>`)}</colgroup>
          <thead><tr><th>DokutypNr (Bez.)</th><th>Bezeichnung</th><th>Dokumentendatum</th></tr></thead>
          <tbody><tr class="flt"><td>${icon('abc')}</td><td>${icon('abc')}</td><td>${icon('equals')}</td></tr>
            <tr class="sep"><td colspan="3"></td></tr>
            <tr class="grp"><td colspan="3"><i></i>Belege [1]</td></tr>
            <tr class="rec"><td>Buchungsbeleg</td><td>Rechnung StWZ</td><td>21.02.2024 08:38:00</td></tr></tbody></table></div>
        <div class="sw"><label>Aktive anzeigen<input type="checkbox" role="switch"></label><label>Erweiterte Ansicht<input type="checkbox" role="switch"></label><label>Öffentliche anzeigen<input type="checkbox" role="switch"></label></div>
      </section>
      <div class="prev"><div class="frame">${this.page()}</div></div>
      <aside class="side">${icon('chevron')}<button>Daten</button></aside>`;
  }
}

@customElement('app-root')
class AppRoot extends LitElement {
  static styles = [shared, css`
    :host { display: grid; grid-template-rows: auto 1fr; height: 100vh; font: 8px/11px "Open Sans", "Noto Sans", sans-serif; background: #f1f1f1; color: #444; }
    .main { display: grid; grid-template-columns: 183px minmax(0, 1fr); min-height: 0; }
    .work { display: grid; grid-template-rows: 23px 1fr; min-height: 0; }
    .tabs { display: flex; align-items: flex-end; border-bottom: 1px solid #c4c4c4; background: #f1f1f1; padding-left: 1px; }
    .tab { display: flex; align-items: center; height: 20px; border: 1px solid #c4c4c4; border-bottom: 0; padding: 0 5px 0 4px; gap: 4px; box-sizing: border-box; font-weight: 500; color: #333; background: #f1f1f1; }
    .tab.on { background: #fff; height: 21px; margin: 0 0 -1px -1px; }
    .tab .glyph:first-child { width: 10px; height: 10px; }
    .panes { display: grid; grid-template-columns: minmax(0, 1fr) 539px; background: #fff; min-height: 0; }
    invoice-form { margin: 3px 0 0 1px; }
  `];
  render() {
    return html`<ribbon-bar></ribbon-bar>
      <div class="main"><side-nav></side-nav>
        <div class="work">
          <div class="tabs"><button class="tab">${icon('gauge')}Dashboard${icon('tabClose')}</button><button class="tab on">${icon('kredi')}Rechnung erfassen/bearbeiten${icon('tabClose')}</button></div>
          <div class="panes"><invoice-form></invoice-form><document-pane></document-pane></div>
        </div>
      </div>`;
  }
}
